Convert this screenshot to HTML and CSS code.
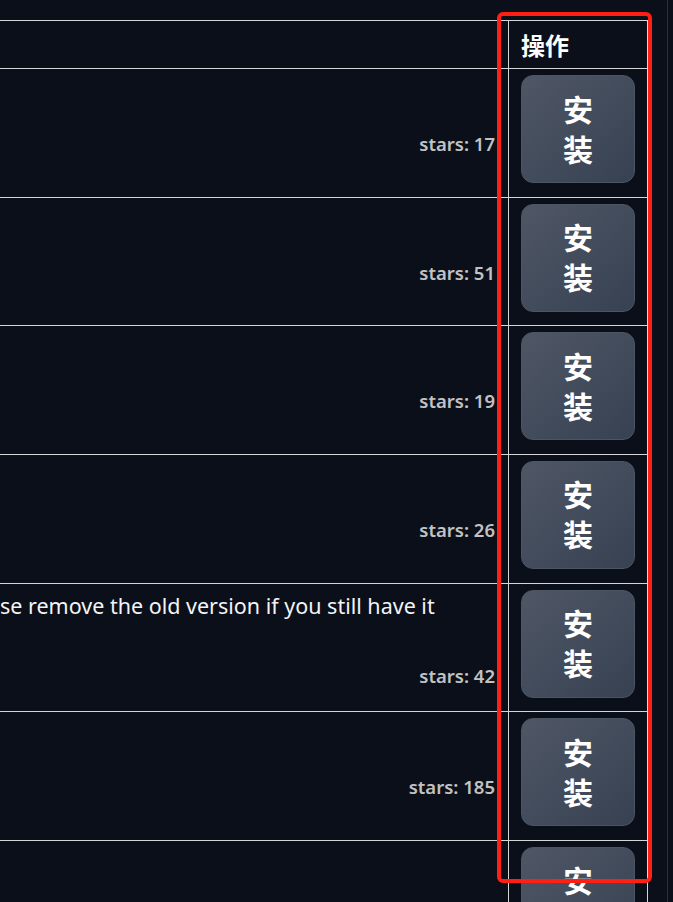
FILE: index.html
```html
<!DOCTYPE html>
<html lang="zh-CN">
<head>
    <meta charset="UTF-8">
    <meta name="viewport" content="width=device-width, initial-scale=1.0">
    <title>扩展列表</title>
    <link rel="stylesheet" href="styles.css">
</head>
<body>

<div class="panel">
    <div class="ext-table">
        <div class="row head">
            <div class="cell info"></div>
            <div class="cell action">操作</div>
        </div>

        <div class="row">
            <div class="cell info">
                <div class="desc"></div>
                <div class="stars">stars: 17</div>
            </div>
            <div class="cell action"><button class="install">安<br>装</button></div>
        </div>
        <div class="row">
            <div class="cell info">
                <div class="desc"></div>
                <div class="stars">stars: 51</div>
            </div>
            <div class="cell action"><button class="install">安<br>装</button></div>
        </div>
        <div class="row">
            <div class="cell info">
                <div class="desc"></div>
                <div class="stars">stars: 19</div>
            </div>
            <div class="cell action"><button class="install">安<br>装</button></div>
        </div>
        <div class="row">
            <div class="cell info">
                <div class="desc"></div>
                <div class="stars">stars: 26</div>
            </div>
            <div class="cell action"><button class="install">安<br>装</button></div>
        </div>
        <div class="row">
            <div class="cell info">
                <div class="desc has-text">se remove the old version if you still have it</div>
                <div class="stars">stars: 42</div>
            </div>
            <div class="cell action"><button class="install">安<br>装</button></div>
        </div>
        <div class="row">
            <div class="cell info">
                <div class="desc"></div>
                <div class="stars">stars: 185</div>
            </div>
            <div class="cell action"><button class="install">安<br>装</button></div>
        </div>
        <div class="row">
            <div class="cell info">
                <div class="desc"></div>
                <div class="stars"></div>
            </div>
            <div class="cell action"><button class="install">安<br>装</button></div>
        </div>
    </div>
</div>

<!-- highlight frame drawn over the action column -->
<div class="highlight"></div>

</body>
</html>
```

FILE: styles.css
```css
body {
    margin: 0;
    background: #0b0f19;
    color: #ffffff;
    font-family: "Noto Sans", "Noto Sans CJK SC", sans-serif;
    height: 902px;
    overflow: hidden;
}
.panel {
    width: 668px;
    height: 902px;
    border-right: 1px solid #2a2f3a;
    padding-top: 20px;
    box-sizing: border-box;
}
.ext-table {
    width: 648px;
    border-top: 1px solid #d6d6d6;
    border-right: 1px solid #d6d6d6;
    box-sizing: border-box;
}
.row {
    display: grid;
    grid-template-columns: 508px 139px;
    height: 128.67px;
    border-bottom: 1px solid #d6d6d6;
    box-sizing: border-box;
}
.row.head {
    height: 48px;
}
.cell {
    overflow: hidden;
}
.cell.action {
    border-left: 1px solid #d6d6d6;
    padding: 6px 0 0 12px;
}
.head .cell.action {
    padding: 0 0 0 12px;
    line-height: 47px;
    font-size: 24px;
    font-weight: 700;
    font-family: "Noto Sans CJK SC", sans-serif;
}
.info {
    padding: 12px 13px 0 0;
    display: flex;
    flex-direction: column;
}
.desc {
    height: 51px;
    font-size: 21.5px;
    line-height: 20px;
    white-space: nowrap;
    color: #f3f4f6;
}
.desc.has-text {
    height: 68px;
}
.stars {
    text-align: right;
    font-size: 18.5px;
    line-height: 24px;
    font-weight: 600;
    color: #c2c2c2;
}
.install {
    width: 114px;
    height: 108px;
    border: 1px solid #4b5563;
    border-radius: 12px;
    background: linear-gradient(to bottom right, #4f5766, #374151);
    color: #ffffff;
    font-family: "Noto Sans CJK SC", sans-serif;
    font-size: 30px;
    font-weight: 700;
    line-height: 40px;
    padding: 0 0 3px;
}
.highlight {
    position: absolute;
    left: 497px;
    top: 12px;
    width: 155px;
    height: 871px;
    border: 4px solid #ff1f14;
    border-radius: 6px;
    box-sizing: border-box;
}
```
